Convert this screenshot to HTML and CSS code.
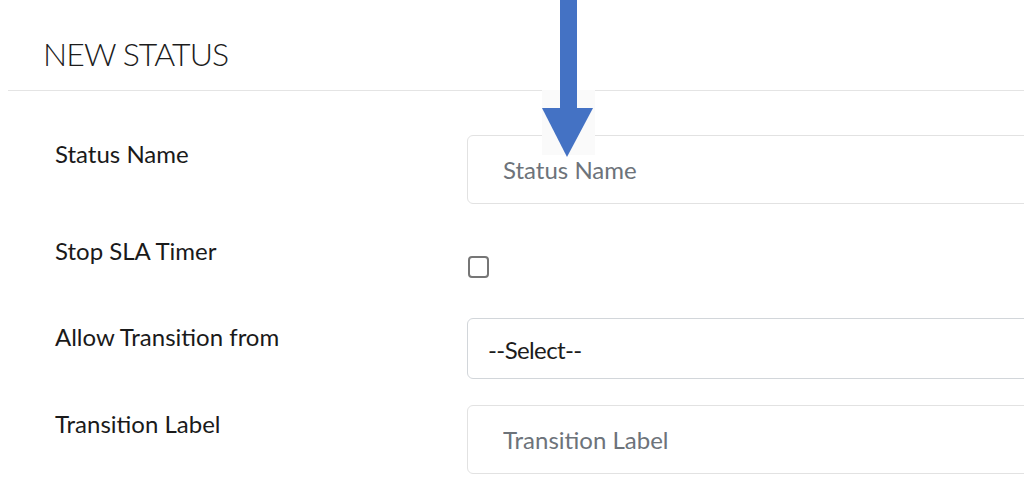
FILE: index.html
```html
<!DOCTYPE html>
<html lang="en">
<head>
<meta charset="utf-8">
<title>New Status</title>
<link rel="stylesheet" href="styles.css">
</head>
<body>
<div class="page">
  <header class="header">
    <h1 class="title">NEW STATUS</h1>
  </header>
  <form class="form">
    <div class="row row-text">
      <label class="label" for="status-name">Status Name</label>
      <input class="control" id="status-name" type="text" placeholder="Status Name">
    </div>
    <div class="row row-check">
      <label class="label" for="stop-sla">Stop SLA Timer</label>
      <div class="check-wrap"><input class="check" id="stop-sla" type="checkbox"></div>
    </div>
    <div class="row row-select">
      <label class="label" for="allow-from">Allow Transition from</label>
      <div class="control select">--Select--</div>
    </div>
    <div class="row row-text">
      <label class="label" for="transition-label">Transition Label</label>
      <input class="control" id="transition-label" type="text" placeholder="Transition Label">
    </div>
  </form>
  <svg class="arrow" width="60" height="160" viewBox="0 0 60 160" aria-hidden="true">
    <rect x="2" y="90" width="53" height="65" fill="#fafafa"/>
    <rect x="20" y="0" width="17" height="109" fill="#4472c4"/>
    <polygon points="2,108 53,108 27,157" fill="#4472c4"/>
  </svg>
</div>
</body>
</html>
```

FILE: styles.css
```css
html, body {
  margin: 0;
  padding: 0;
  background: #ffffff;
  overflow: hidden;
}

.page {
  position: relative;
  width: 1024px;
  height: 497px;
  overflow: hidden;
  font-family: "Lato", "Open Sans", sans-serif;
  color: #1a1a1a;
}

.header {
  margin-left: 8px;
  height: 90px;
  border-bottom: 1px solid #e4e4e4;
  display: flex;
  align-items: flex-end;
}

.title {
  margin: 0 0 16px 35px;
  font-size: 32px;
  font-weight: 300;
  letter-spacing: -0.9px;
  color: #1c1c1c;
  line-height: 40px;
}

.form {
  display: flex;
  flex-direction: column;
  gap: 26px;
  padding: 44px 0 0 55px;
}

.row {
  display: grid;
  grid-template-columns: 412px 620px;
  align-items: start;
}

.label {
  font-size: 24px;
  line-height: 30px;
  padding-top: 4px;
  color: #1a1a1a;
}

.control {
  box-sizing: border-box;
  width: 620px;
  margin: 0;
  border: 1px solid #e2e2e2;
  border-radius: 6px;
  background: #fff;
  font-family: inherit;
  font-size: 24px;
  color: #222;
  outline: none;
}

.row-text .control {
  height: 69px;
  padding: 0 0 0 35px;
}

.control::placeholder {
  color: #6d737a;
}

.row-check {
  height: 60px;
  margin-top: 2px;
}

.check-wrap {
  padding-top: 24px;
}

.check {
  appearance: none;
  -webkit-appearance: none;
  display: block;
  margin: 0 0 0 1px;
  width: 21px;
  height: 22px;
  border: 2px solid #767676;
  border-radius: 4px;
  box-sizing: border-box;
  background: #fff;
}

.select {
  height: 61px;
  border-color: #d2d6da;
  padding: 2px 0 0 20px;
  display: flex;
  align-items: center;
  letter-spacing: -0.6px;
  color: #1c1c1c;
}

.arrow {
  position: absolute;
  left: 540px;
  top: 0;
}
```
